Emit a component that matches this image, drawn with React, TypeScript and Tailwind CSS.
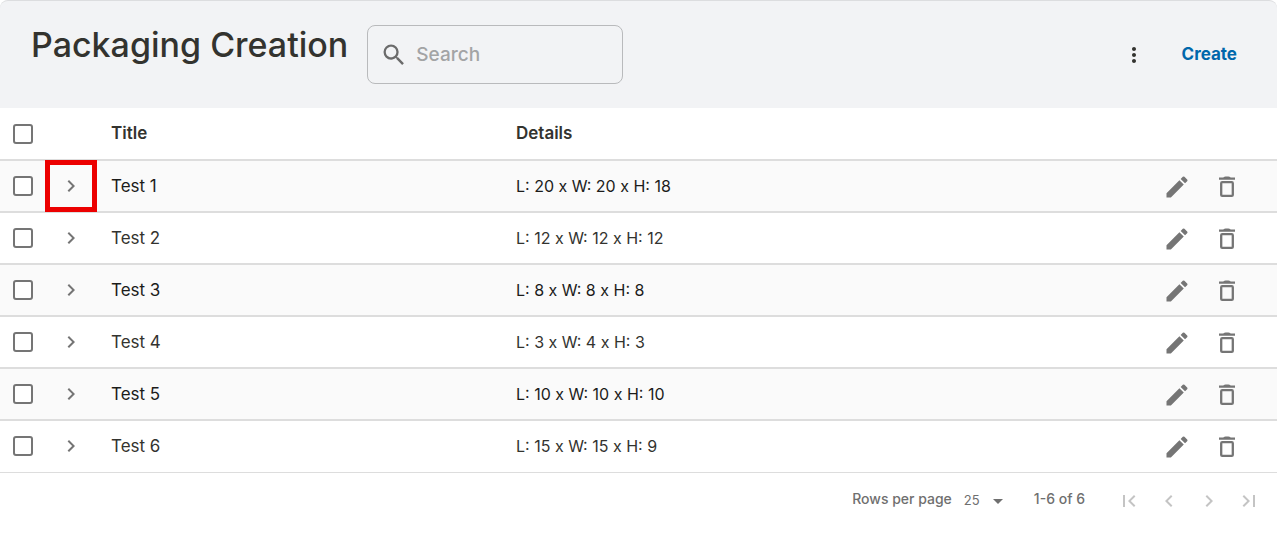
import {
  MdArrowDropDown,
  MdChevronLeft,
  MdChevronRight,
  MdEdit,
  MdFirstPage,
  MdLastPage,
  MdMoreVert,
  MdSearch,
} from 'react-icons/md';

interface Packaging {
  title: string;
  details: string;
}

const rows: Packaging[] = [
  { title: 'Test 1', details: 'L: 20 x W: 20 x H: 18' },
  { title: 'Test 2', details: 'L: 12 x W: 12 x H: 12' },
  { title: 'Test 3', details: 'L: 8 x W: 8 x H: 8' },
  { title: 'Test 4', details: 'L: 3 x W: 4 x H: 3' },
  { title: 'Test 5', details: 'L: 10 x W: 10 x H: 10' },
  { title: 'Test 6', details: 'L: 15 x W: 15 x H: 9' },
];

function TrashIcon() {
  return (
    <svg viewBox="0 0 28 28" className="size-7" aria-hidden="true">
      <path d="M6 4.600h4.400C10.800 3.600 12 3.400 14 3.400s3.200.2 3.600 1.200H22v2.200H6z" fill="currentColor" />
      <rect x="8.2" y="9.2" width="11.6" height="13.7" rx="1" fill="none" stroke="currentColor" strokeWidth="2.3" />
    </svg>
  );
}

function Checkbox({ label }: { label: string }) {
  return (
    <input
      type="checkbox"
      aria-label={label}
      className="ml-[13px] block size-5 appearance-none rounded-[3px] border-2 border-[#757575] bg-white checked:bg-[#757575]"
    />
  );
}

function Toolbar() {
  return (
    <header className="flex items-start rounded-t-lg border-t border-[#dcdddf] bg-[#f2f3f5] pt-6 pr-10 pb-6 pl-[31px]">
      <h1 className="text-[34px] leading-10 font-medium text-[#33332f]">Packaging Creation</h1>
      <label className="ml-[19px] flex h-[59px] w-64 items-center rounded-lg border border-[#b9babc] pr-3 pl-3">
        <MdSearch className="size-7 shrink-0 text-[#6b6b6b]" />
        <input
          type="search"
          aria-label="Search"
          placeholder="Search"
          className="ml-2 w-full min-w-0 bg-transparent text-[19px] leading-7 font-medium outline-none placeholder:text-[#a3a4a5]"
        />
      </label>
      <div className="ml-auto flex h-[59px] items-center gap-9">
        <button type="button" aria-label="More options" className="text-[#33332f]">
          <MdMoreVert className="size-6" />
        </button>
        <button type="button" className="text-[17px] font-bold text-[#0067ab]">
          Create
        </button>
      </div>
    </header>
  );
}

function PackagingRow({ row, first }: { row: Packaging; first: boolean }) {
  return (
    <tr className="h-[52px] border-b-2 border-[#dddddd] text-[#33332f] odd:bg-[#fafafa] odd:text-[#1c1c1a] last:border-b">
      <td>
        <Checkbox label={`Select ${row.title}`} />
      </td>
      <td className="relative">
        <button type="button" aria-label={`Expand ${row.title}`} className="mx-auto block text-[#757575]">
          <MdChevronRight className="size-6" />
        </button>
        {first && <span className="pointer-events-none absolute inset-x-0 -inset-y-px border-5 border-[#ec0000]" />}
      </td>
      <td className="pl-[14px] text-[17px] leading-6">{row.title}</td>
      <td className="pl-[14px]">{row.details}</td>
      <td>
        <div className="flex justify-end pt-0.5 pr-[25px] text-[#757575]">
          <button type="button" aria-label={`Edit ${row.title}`} className="flex w-[50px] justify-center">
            <MdEdit className="size-7" />
          </button>
          <button type="button" aria-label={`Delete ${row.title}`} className="flex w-[50px] justify-center">
            <TrashIcon />
          </button>
        </div>
      </td>
    </tr>
  );
}

function Pagination() {
  return (
    <footer className="flex h-14 items-center justify-end pr-4 text-sm text-[#6f6f6f]">
      <label htmlFor="rows-per-page" className="pb-1 font-medium">
        Rows per page
      </label>
      <div className="relative ml-3 flex items-center">
        <select
          id="rows-per-page"
          defaultValue="25"
          className="w-[46px] appearance-none bg-transparent text-[13px] outline-none"
        >
          <option>25</option>
          <option>50</option>
          <option>100</option>
        </select>
        <MdArrowDropDown className="pointer-events-none absolute right-0 size-6" />
      </div>
      <span className="ml-6 pb-1 font-medium">1-6 of 6</span>
      <nav aria-label="Pagination" className="ml-8 flex gap-4 text-[#c4c4c4]">
        <button type="button" aria-label="First page" disabled>
          <MdFirstPage className="size-6" />
        </button>
        <button type="button" aria-label="Previous page" disabled>
          <MdChevronLeft className="size-6" />
        </button>
        <button type="button" aria-label="Next page" disabled>
          <MdChevronRight className="size-6" />
        </button>
        <button type="button" aria-label="Last page" disabled>
          <MdLastPage className="size-6" />
        </button>
      </nav>
    </footer>
  );
}

export default function App() {
  return (
    <main className="min-h-screen bg-white font-['Inter',sans-serif]">
      <Toolbar />
      <table className="w-full table-fixed border-collapse text-left text-base">
        <colgroup>
          <col className="w-[45px]" />
          <col className="w-[52px]" />
          <col className="w-[405px]" />
          <col />
          <col className="w-[150px]" />
        </colgroup>
        <thead>
          <tr className="h-[52px] border-b-2 border-[#dddddd] text-[17px] text-[#33332f]">
            <th>
              <Checkbox label="Select all" />
            </th>
            <th />
            <th className="pl-[14px] font-semibold">Title</th>
            <th className="pl-[14px] font-semibold">Details</th>
            <th />
          </tr>
        </thead>
        <tbody>
          {rows.map((row, i) => (
            <PackagingRow key={row.title} row={row} first={i === 0} />
          ))}
        </tbody>
      </table>
      <Pagination />
    </main>
  );
}
